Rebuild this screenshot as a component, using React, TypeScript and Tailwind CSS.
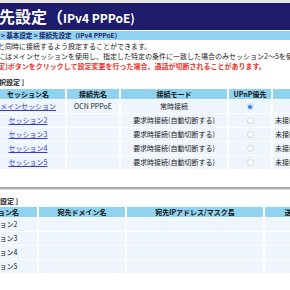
import React from "react";

const rows1 = [
  { name: "メインセッション", dest: "OCN PPPoE", mode: "常時接続", on: true, st: "" },
  { name: "セッション2", dest: "", mode: "要求時接続(自動切断する)", on: false, st: "未接続" },
  { name: "セッション3", dest: "", mode: "要求時接続(自動切断する)", on: false, st: "未接続" },
  { name: "セッション4", dest: "", mode: "要求時接続(自動切断する)", on: false, st: "未接続" },
  { name: "セッション5", dest: "", mode: "要求時接続(自動切断する)", on: false, st: "未接続" },
];

function Radio({ on }: { on: boolean }) {
  return on ? (
    <span className="inline-flex w-[7px] h-[7px] rounded-full bg-[#cfe0fb] items-center justify-center">
      <span className="w-[4px] h-[4px] rounded-full bg-[#3b7be8]" />
    </span>
  ) : (
    <span className="inline-block w-[7px] h-[7px] rounded-full border border-[#d4d4d4] bg-white" />
  );
}

export default function App() {
  return (
    <div className="w-[290px] h-[290px] overflow-hidden bg-white font-['Noto_Sans_CJK_JP',sans-serif] text-[#222]">
      <div className="h-[3px] bg-[#e6e6e6]" />
      <div className="h-[27px] bg-[#1c1b6c] text-white font-bold text-[16px] leading-[27px] whitespace-nowrap -ml-[1px]">
        先設定（<span className="text-[12px]">IPv4 PPPoE</span><span className="text-[12px]">)</span>
      </div>
      <div className="h-px bg-white" />
      <div className="h-[9px] bg-[#8fd3f0] text-[6.5px] font-bold text-[#1c1b6c] leading-[9px] whitespace-nowrap pl-[1px]">
        &gt; 基本設定 &gt; 接続先設定（IPv4 PPPoE）
      </div>
      <div className="mt-px text-[7px] leading-[10px] whitespace-nowrap">
        <div className="-ml-[2px]">と同時に接続するよう設定することができます。</div>
        <div className="-ml-[2px]">にはメインセッションを使用し、指定した特定の条件に一致した場合のみセッション2～5を使用</div>
        <div className="-ml-[2px] text-[#e8312a] font-bold">定]ボタンをクリックして設定変更を行った場合、通話が切断されることがあります。</div>
      </div>
      <div className="mt-[6px] text-[7px] leading-[10px] font-bold whitespace-nowrap -ml-[1px]">択設定 ]</div>

      <div className="mt-[2px] -ml-[9px] grid grid-cols-[74px_52px_106px_42px_60px] gap-x-[2px] gap-y-px text-[7px] whitespace-nowrap">
        {["セッション名", "接続先名", "接続モード", "UPnP優先", ""].map((h, i) => (
          <div key={i} className="h-[10px] bg-[#8fd3f0] font-bold leading-[10px] text-center text-[#111]">{h}</div>
        ))}
        {rows1.map((r, i) => (
          <React.Fragment key={i}>
            <div className="h-[13px] bg-[#eef5fd] leading-[13px] text-center">
              <span className="text-[#3a3ad0] underline">{r.name}</span>
            </div>
            <div className="h-[13px] bg-[#eef5fd] leading-[13px] text-center">{r.dest}</div>
            <div className="h-[13px] bg-[#eef5fd] leading-[13px] text-center">{r.mode}</div>
            <div className="h-[13px] bg-[#eef5fd] flex items-center justify-center"><Radio on={r.on} /></div>
            <div className="h-[13px] bg-[#eef5fd] leading-[13px] pl-[2px]">{r.st}</div>
          </React.Fragment>
        ))}
      </div>

      <div className="mt-[18px] h-[2px] bg-[#a9a9a9]" />
      <div className="h-px bg-[#dcdcdc]" />
      <div className="mt-[6px] text-[7px] leading-[10px] font-bold whitespace-nowrap">設定 ]</div>

      <div className="mt-px -ml-[41px] grid grid-cols-[78px_86px_136px_60px] gap-x-[2px] gap-y-px text-[7px] whitespace-nowrap">
        {["セッション名", "宛先ドメイン名", "宛先IPアドレス/マスク長", "送信元"].map((h, i) => (
          <div key={i} className="h-[10px] bg-[#8fd3f0] font-bold leading-[10px] text-center text-[#111]">{h}</div>
        ))}
        {[2, 3, 4, 5].map((n) => (
          <React.Fragment key={n}>
            <div className="h-[13px] bg-[#eef5fd] leading-[13px] text-center">セッション{n}</div>
            <div className="h-[13px] bg-[#eef5fd]" />
            <div className="h-[13px] bg-[#eef5fd]" />
            <div className="h-[13px] bg-[#eef5fd]" />
          </React.Fragment>
        ))}
      </div>
    </div>
  );
}
